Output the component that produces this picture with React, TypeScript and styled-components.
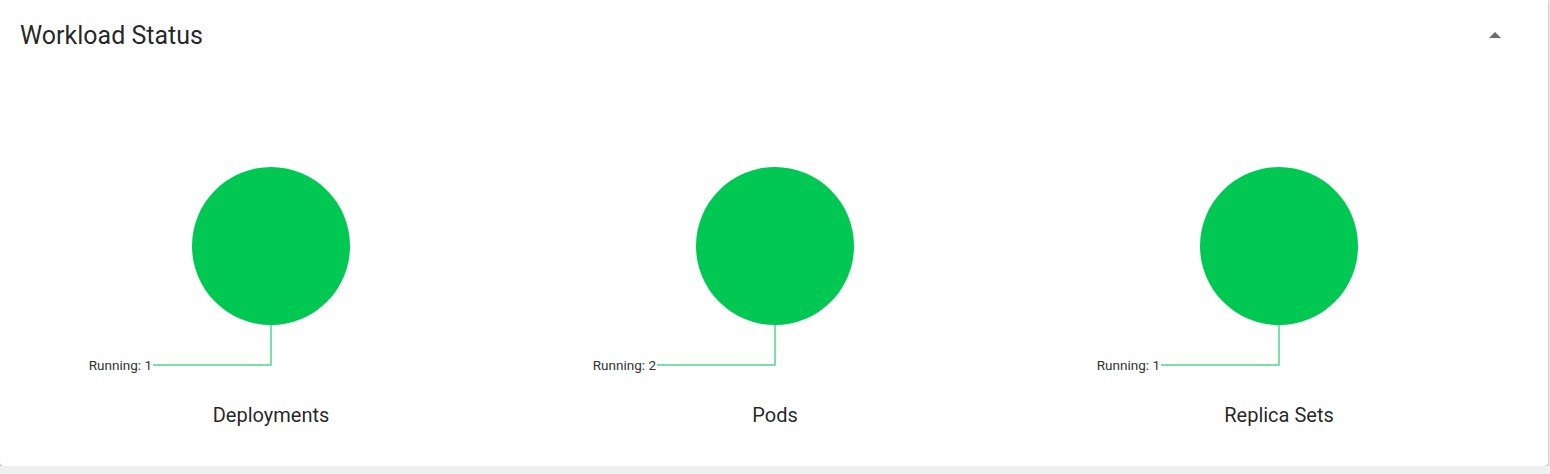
import * as React from 'react';
import styled, { createGlobalStyle } from 'styled-components';

const GlobalStyle = createGlobalStyle`
    body {
        margin: 0;
        background: #f0f0f0;
        font-family: Roboto, 'Liberation Sans', sans-serif;
    }
`;

const Card = styled.section`
    width: 1548px;
    background: #fff;
    border-radius: 0 0 4px 4px;
    box-shadow: 0 1px 3px rgba(0, 0, 0, 0.35);
`;

const Header = styled.header`
    height: 70px;
    padding: 0 47px 0 20px;
    display: flex;
    align-items: center;
    justify-content: space-between;
`;

const Title = styled.h2`
    margin: 0;
    font-size: 25px;
    font-weight: 400;
    color: rgba(0, 0, 0, 0.87);
`;

const Caret = styled.span`
    width: 0;
    height: 0;
    border-left: 6px solid transparent;
    border-right: 6px solid transparent;
    border-bottom: 6px solid #6b6b6b;
    margin-top: -1px;
`;

const Charts = styled.div`
    display: grid;
    grid-template-columns: repeat(3, 1fr);
    padding: 0 19px 39px;
`;

const Column = styled.div`
    display: flex;
    flex-direction: column;
    align-items: center;
`;

const Name = styled.div`
    margin-top: 13px;
    font-size: 20px;
    line-height: 24px;
    color: rgba(0, 0, 0, 0.87);
`;

interface ChartProps {
    name: string;
    running: number;
}

const StatusChart: React.FC<ChartProps> = ({ name, running }) => (
    <Column>
        <svg width="504" height="320">
            <circle cx="252" cy="176" r="79" fill="#00c853" />
            <polyline
                points="252,255 252,295 134,295"
                fill="none"
                stroke="#4fd68a"
                strokeWidth="1.5"
            />
            <text
                x="133"
                y="300"
                textAnchor="end"
                fontSize="13.5"
                fontFamily="Roboto, 'Liberation Sans', sans-serif"
                fill="#333"
            >
                Running: {running}
            </text>
        </svg>
        <Name>{name}</Name>
    </Column>
);

const App: React.FC = () => (
    <>
        <GlobalStyle />
        <Card>
            <Header>
                <Title>Workload Status</Title>
                <Caret />
            </Header>
            <Charts>
                <StatusChart name="Deployments" running={1} />
                <StatusChart name="Pods" running={2} />
                <StatusChart name="Replica Sets" running={1} />
            </Charts>
        </Card>
    </>
);

export default App;
